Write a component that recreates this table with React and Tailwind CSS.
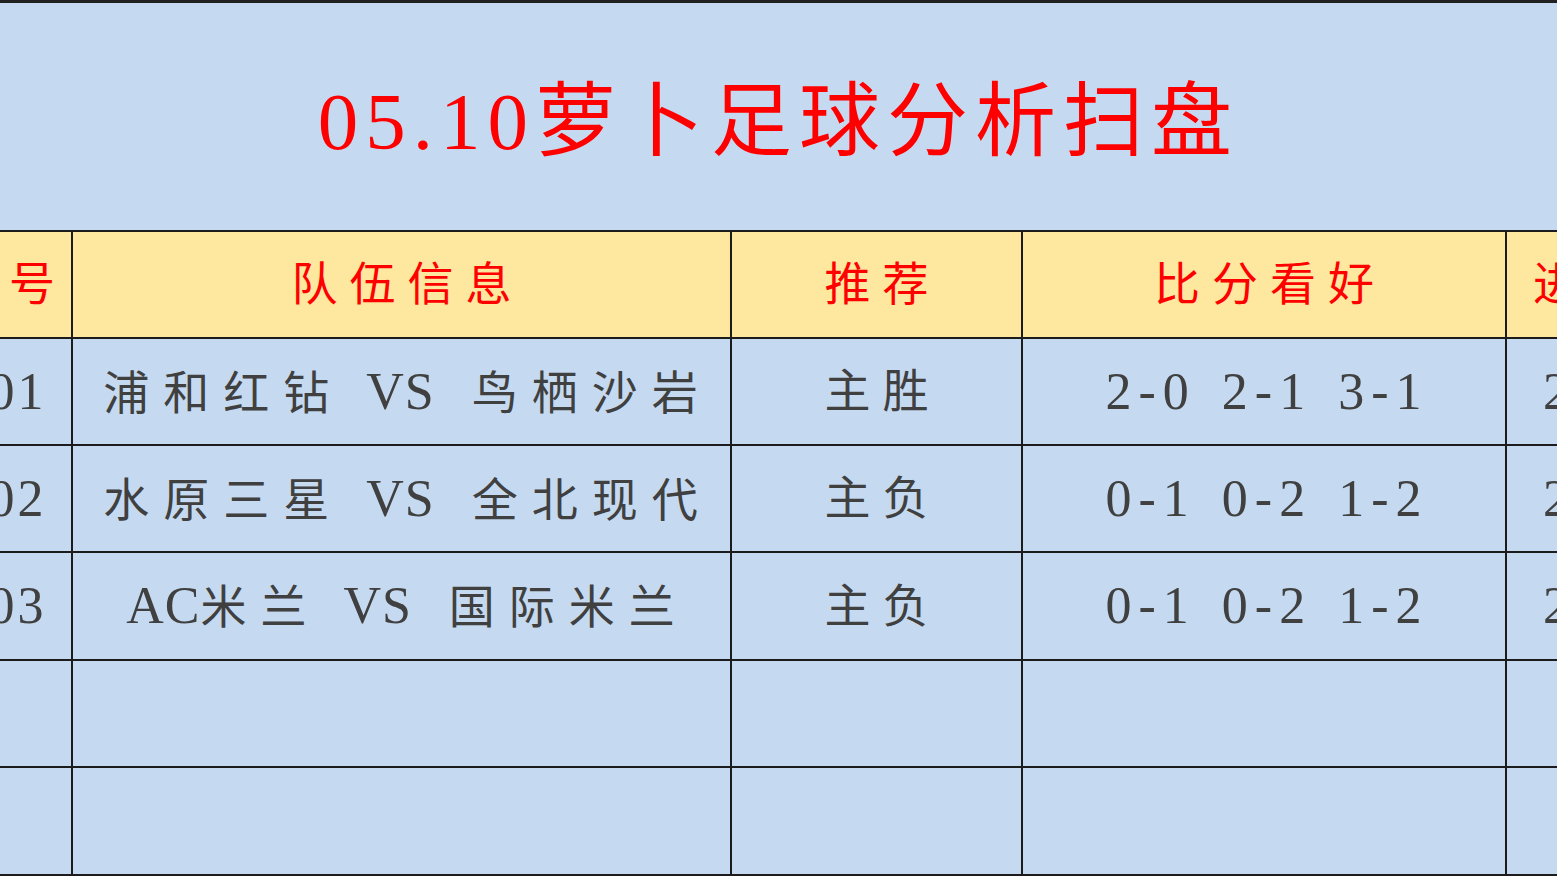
import React from 'react';

const font = { fontFamily: '"Liberation Serif", "Noto Sans CJK SC", serif' };

const rows = [
  { no: '001', home: '浦和红钻', away: '鸟栖沙岩', pick: '主胜', score: ['2-0', '2-1', '3-1'], goals: '2-3' },
  { no: '002', home: '水原三星', away: '全北现代', pick: '主负', score: ['0-1', '0-2', '1-2'], goals: '2-3' },
  { no: '003', home: 'AC米兰', away: '国际米兰', pick: '主负', score: ['0-1', '0-2', '1-2'], goals: '2-3' },
  { no: '', home: '', away: '', pick: '', score: [], goals: '' },
  { no: '', home: '', away: '', pick: '', score: [], goals: '' },
];

const heights = ['h-[107px]', 'h-[107px]', 'h-[108px]', 'h-[107px]', 'h-[108px]'];

// latin / digits look bigger than the CJK glyphs in the source sheet
function Latin({ children, className = '' }) {
  return <span className={`text-[52px] ${className}`}>{children}</span>;
}

function TeamName({ name }) {
  if (name.startsWith('AC')) {
    return (
      <>
        <Latin className="tracking-[1px]">AC</Latin>
        <span className="tracking-[14px]">{name.slice(2)}</span>
      </>
    );
  }
  return <span className="tracking-[14px]">{name}</span>;
}

function TeamText({ home, away }) {
  if (!home) return null;
  return (
    <span className="whitespace-pre">
      <TeamName name={home} />
      <span>{'\u2002'}</span>
      <Latin className="tracking-[1px] text-[50px]">VS</Latin>
      <span className="tracking-[14px]">{'\u2002'}</span>
      <TeamName name={away} />
    </span>
  );
}

function Score({ list }) {
  return (
    <span className="whitespace-pre">
      {list.map((s, i) => (
        <React.Fragment key={i}>
          {i > 0 && <Latin>{'\u2002'}</Latin>}
          <Latin className="tracking-[7px]">{s}</Latin>
        </React.Fragment>
      ))}
    </span>
  );
}

function Row({ children, h, bg }) {
  return (
    <div className={`flex ${h} border-t-2 border-[#1c1c1c] ${bg}`}>{children}</div>
  );
}

const c1 = 'w-[136px] shrink-0 flex items-center justify-center text-[46px]';
const c2 = 'w-[659px] shrink-0 border-l-2 border-[#1c1c1c] flex items-center justify-center text-[46px]';
const c3 = 'w-[291px] shrink-0 border-l-2 border-[#1c1c1c] flex items-center justify-center pl-[12px] text-[46px]';
const c4 = 'w-[484px] shrink-0 border-l-2 border-[#1c1c1c] flex items-center justify-center text-[46px]';
const c5 = 'w-[300px] shrink-0 border-l-2 border-[#1c1c1c] flex items-center justify-start text-[46px]';

export default function App() {
  return (
    <div className="w-[1557px] h-[876px] overflow-hidden bg-[#c5daf0] border-t-[3px] border-[#202020]" style={font}>
      <div className="h-[227px] flex items-center justify-center pt-[12px]">
        <h1 className="text-[81px] leading-none text-[#ff0000] tracking-[7px] font-normal">05.10萝卜足球分析扫盘</h1>
      </div>

      <div className="ml-[-65px] w-[1870px] border-b-2 border-[#1c1c1c]">
        <Row h="h-[107px]" bg="bg-[#fee89f]">
          <div className={`${c1} pl-[12px] text-[#ff0000] tracking-[12px]`}>序号</div>
          <div className={`${c2} pl-[12px] text-[#ff0000] tracking-[12px]`}>队伍信息</div>
          <div className={`${c3} text-[#ff0000] tracking-[12px]`}>推荐</div>
          <div className={`${c4} pl-[12px] text-[#ff0000] tracking-[12px]`}>比分看好</div>
          <div className={`${c5} pl-[26px] text-[#ff0000] tracking-[12px]`}>进球数</div>
        </Row>
        {rows.map((r, i) => (
          <Row key={i} h={heights[i]} bg="bg-[#c5daf0]">
            <div className={`${c1} text-[#404040]`}>
              {r.no && <Latin className="tracking-[3px]">{r.no}</Latin>}
            </div>
            <div className={`${c2} pl-[12px] text-[#404040]`}>
              <TeamText home={r.home} away={r.away} />
            </div>
            <div className={`${c3} text-[#404040] tracking-[12px]`}>{r.pick}</div>
            <div className={`${c4} pl-[6px] text-[#404040]`}>
              <Score list={r.score} />
            </div>
            <div className={`${c5} pl-[36px] text-[#404040]`}>
              {r.goals && <Latin className="tracking-[3px]">{r.goals}</Latin>}
            </div>
          </Row>
        ))}
      </div>
    </div>
  );
}
